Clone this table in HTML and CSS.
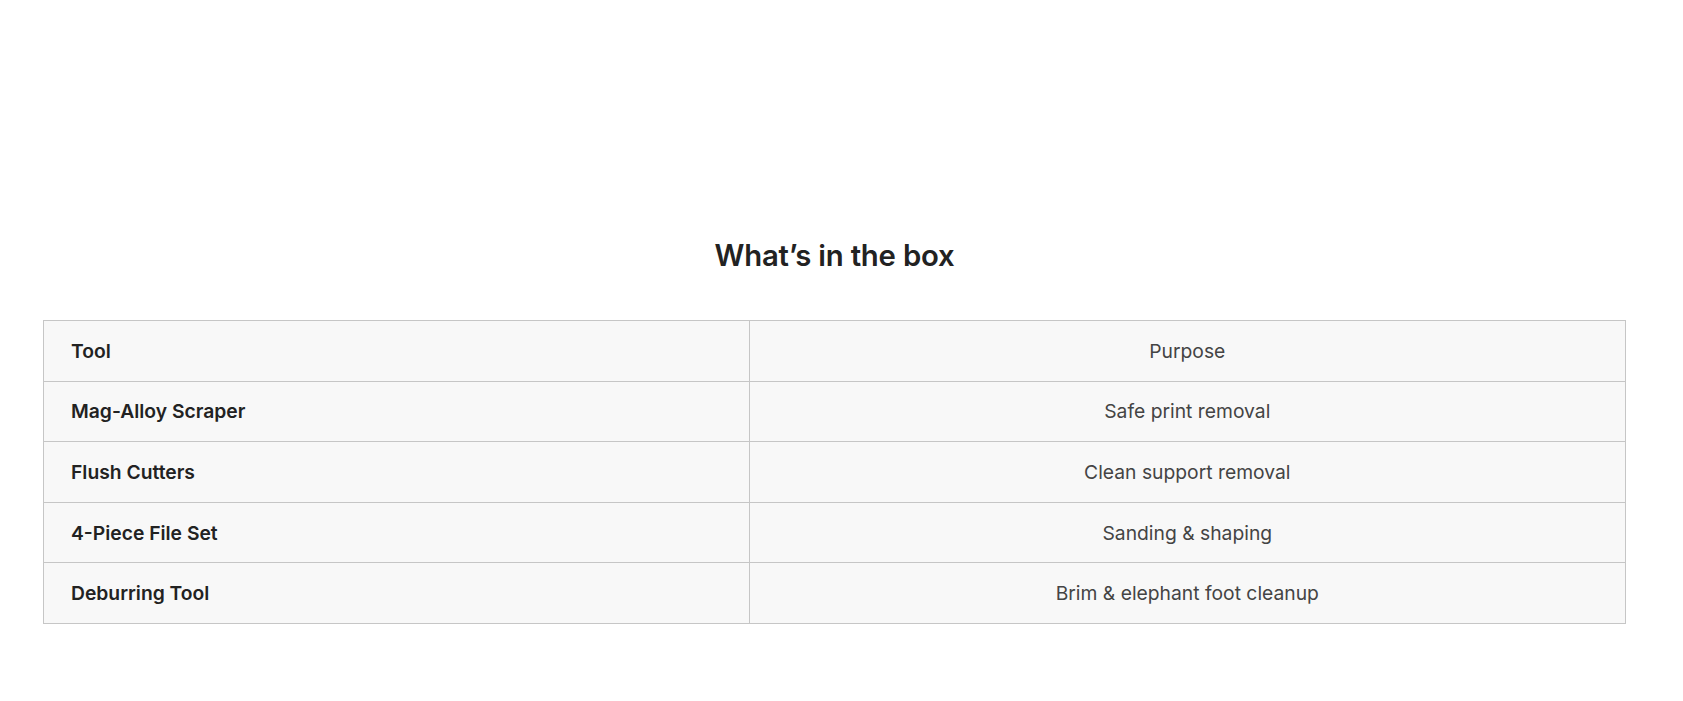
FILE: index.html
```html
<!DOCTYPE html>
<html lang="en">
<head>
<meta charset="utf-8">
<title>What's in the box</title>
<link rel="stylesheet" href="styles.css">
</head>
<body>
<main class="page">
  <section class="box">
    <h2 class="box-title">What’s in the box</h2>
    <table class="box-table">
      <tbody>
        <tr><th class="tool">Tool</th><td class="purpose">Purpose</td></tr>
        <tr><th class="tool">Mag-Alloy Scraper</th><td class="purpose">Safe print removal</td></tr>
        <tr><th class="tool">Flush Cutters</th><td class="purpose">Clean support removal</td></tr>
        <tr><th class="tool">4-Piece File Set</th><td class="purpose">Sanding &amp; shaping</td></tr>
        <tr><th class="tool">Deburring Tool</th><td class="purpose">Brim &amp; elephant foot cleanup</td></tr>
      </tbody>
    </table>
  </section>
</main>
</body>
</html>
```
FILE: styles.css
```css
html, body {
  margin: 0;
  padding: 0;
  background: #ffffff;
}
body {
  font-family: Inter, "Noto Sans", "Liberation Sans", sans-serif;
  color: #222;
}
.page {
  padding: 237px 57px 0 43px;
}
.box-title {
  margin: 0 0 46px;
  text-align: center;
  font-size: 29.3px;
  font-weight: 600;
  line-height: 37px;
  color: #222;
  letter-spacing: -0.2px;
}
.box-table {
  width: 100%;
  border-collapse: collapse;
  background: #f8f8f8;
  border: 1px solid #c6c6c6;
}
.box-table th,
.box-table td {
  border: 1px solid #c6c6c6;
  height: 60.6px;
  padding: 0 27px;
  font-size: 19.3px;
  box-sizing: border-box;
}
.tool {
  width: 44.6%;
  text-align: left;
  font-weight: 600;
  color: #222;
}
.purpose {
  text-align: center;
  font-weight: 400;
  color: #444;
}
```
